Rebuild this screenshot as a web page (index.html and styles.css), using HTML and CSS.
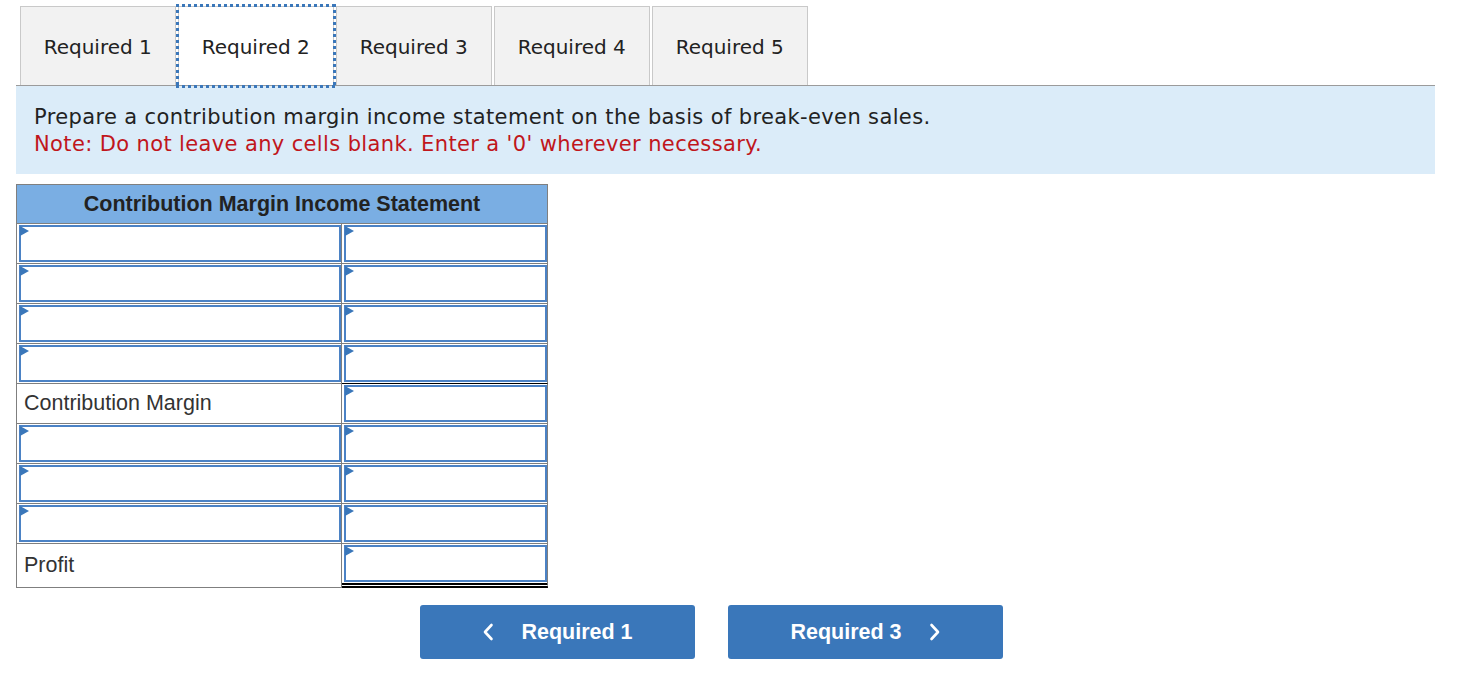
FILE: index.html
```html
<!DOCTYPE html>
<html lang="en">
<head>
<meta charset="utf-8">
<title>Required 2</title>
<link rel="stylesheet" href="styles.css">
</head>
<body>
<div class="page">
  <div class="tabs">
    <div class="tab">Required 1</div>
    <div class="tab active">Required 2</div>
    <div class="tab">Required 3</div>
    <div class="tab">Required 4</div>
    <div class="tab">Required 5</div>
  </div>
  <div class="panel">
    <p class="prompt">Prepare a contribution margin income statement on the basis of break-even sales.</p>
    <p class="note">Note: Do not leave any cells blank. Enter a '0' wherever necessary.</p>
  </div>
  <table class="stmt">
    <colgroup><col class="c1"><col class="c2"></colgroup>
    <thead>
      <tr><th colspan="2">Contribution Margin Income Statement</th></tr>
    </thead>
    <tbody>
      <tr><td class="l"><div class="inp"></div></td><td class="r"><div class="inp"></div></td></tr>
      <tr><td class="l"><div class="inp"></div></td><td class="r"><div class="inp"></div></td></tr>
      <tr><td class="l"><div class="inp"></div></td><td class="r"><div class="inp"></div></td></tr>
      <tr><td class="l"><div class="inp"></div></td><td class="r sum-above"><div class="inp"></div></td></tr>
      <tr><td class="l label">Contribution Margin</td><td class="r"><div class="inp"></div></td></tr>
      <tr><td class="l"><div class="inp"></div></td><td class="r"><div class="inp"></div></td></tr>
      <tr><td class="l"><div class="inp"></div></td><td class="r"><div class="inp"></div></td></tr>
      <tr><td class="l"><div class="inp"></div></td><td class="r"><div class="inp"></div></td></tr>
      <tr><td class="l label">Profit</td><td class="r total"><div class="inp"></div></td></tr>
    </tbody>
  </table>
  <div class="nav">
    <button class="btn" type="button">
      <svg class="chev" width="12" height="18" viewBox="0 0 12 18"><polyline points="9.5,2 3,9 9.5,16" fill="none" stroke="#fff" stroke-width="2.6" stroke-linecap="round" stroke-linejoin="round"/></svg>
      <span>Required 1</span>
    </button>
    <button class="btn" type="button">
      <span>Required 3</span>
      <svg class="chev" width="12" height="18" viewBox="0 0 12 18"><polyline points="2.5,2 9,9 2.5,16" fill="none" stroke="#fff" stroke-width="2.6" stroke-linecap="round" stroke-linejoin="round"/></svg>
    </button>
  </div>
</div>
</body>
</html>
```
FILE: styles.css
```css
html, body {
  margin: 0;
  padding: 0;
  background: #fff;
}

.page {
  padding: 6px 22px 0 16px;
}

.tabs {
  display: flex;
  gap: 2.5px;
  margin-left: 4px;
}

.tab {
  box-sizing: border-box;
  width: 155.5px;
  height: 79px;
  display: flex;
  align-items: center;
  justify-content: center;
  background: #f2f2f2;
  border: 1px solid #c9c9c9;
  border-bottom: none;
  font-family: "DejaVu Sans", Verdana, sans-serif;
  font-size: 20px;
  color: #222;
  padding-top: 2px;
}

.tab.active {
  background: #fff;
  position: relative;
  z-index: 1;
}

.tab.active::after {
  content: "";
  position: absolute;
  top: -3px;
  left: -3px;
  right: -3px;
  bottom: -3px;
  pointer-events: none;
  background:
    repeating-linear-gradient(90deg, #3a77ba 0 3px, transparent 3px 6px) left top / 100% 3px no-repeat,
    repeating-linear-gradient(90deg, #3a77ba 0 3px, transparent 3px 6px) left bottom / 100% 3px no-repeat,
    repeating-linear-gradient(180deg, #3a77ba 0 3px, transparent 3px 6px) left top / 3px 100% no-repeat,
    repeating-linear-gradient(180deg, #3a77ba 0 3px, transparent 3px 6px) right top / 3px 100% no-repeat;
}

.panel {
  border-top: 1px solid #9b9b9b;
  background: #dbecf9;
  padding: 18px 18px 16px;
  font-family: "DejaVu Sans", Verdana, sans-serif;
  font-size: 21px;
  letter-spacing: 0.37px;
  line-height: 27px;
}

.panel p {
  margin: 0;
}

.prompt {
  color: #222;
}

.note {
  color: #c0161c;
}

.stmt {
  margin-top: 10px;
  width: 532px;
  table-layout: fixed;
  border-collapse: separate;
  border-spacing: 0;
  font-family: "Liberation Sans", Arial, sans-serif;
  font-size: 21.5px;
  color: #333;
}

.c1 { width: 326px; }
.c2 { width: 206px; }

.stmt th {
  height: 38px;
  padding: 0;
  background: #7aaee3;
  border: 1px solid #7f7f7f;
  font-weight: bold;
  color: #222;
  text-align: center;
  vertical-align: middle;
}

.stmt td {
  height: 37px;
  padding: 1px 0 1px 2px;
  border-bottom: 1px solid #7f7f7f;
  vertical-align: top;
}

.stmt td.l {
  border-left: 1px solid #7f7f7f;
  border-right: 1px solid #7f7f7f;
}

.stmt td.r {
  border-right: 1px solid #7f7f7f;
}

.stmt td.sum-above {
  border-bottom-color: #000;
}

.stmt td.label {
  padding: 0 0 0 7px;
  vertical-align: middle;
}

.stmt td.total {
  border-bottom: 5px double #000;
}

.inp {
  position: relative;
  box-sizing: border-box;
  height: 37px;
  border: 2px solid #4b82c5;
  background: #fff;
}

.inp::before {
  content: "";
  position: absolute;
  left: -1px;
  top: -1px;
  border-left: 9px solid #3a77ba;
  border-top: 5.5px solid transparent;
  border-bottom: 5.5px solid transparent;
}

.nav {
  display: flex;
  gap: 33px;
  margin: 17px 0 0 404px;
}

.btn {
  box-sizing: border-box;
  width: 275px;
  height: 54px;
  display: flex;
  align-items: center;
  justify-content: center;
  gap: 27px;
  border: none;
  border-radius: 3px;
  background: #3a77ba;
  color: #fff;
  font-family: "Liberation Sans", Arial, sans-serif;
  font-weight: bold;
  font-size: 21.5px;
  padding: 0;
  cursor: pointer;
}

.chev {
  display: block;
}
```
